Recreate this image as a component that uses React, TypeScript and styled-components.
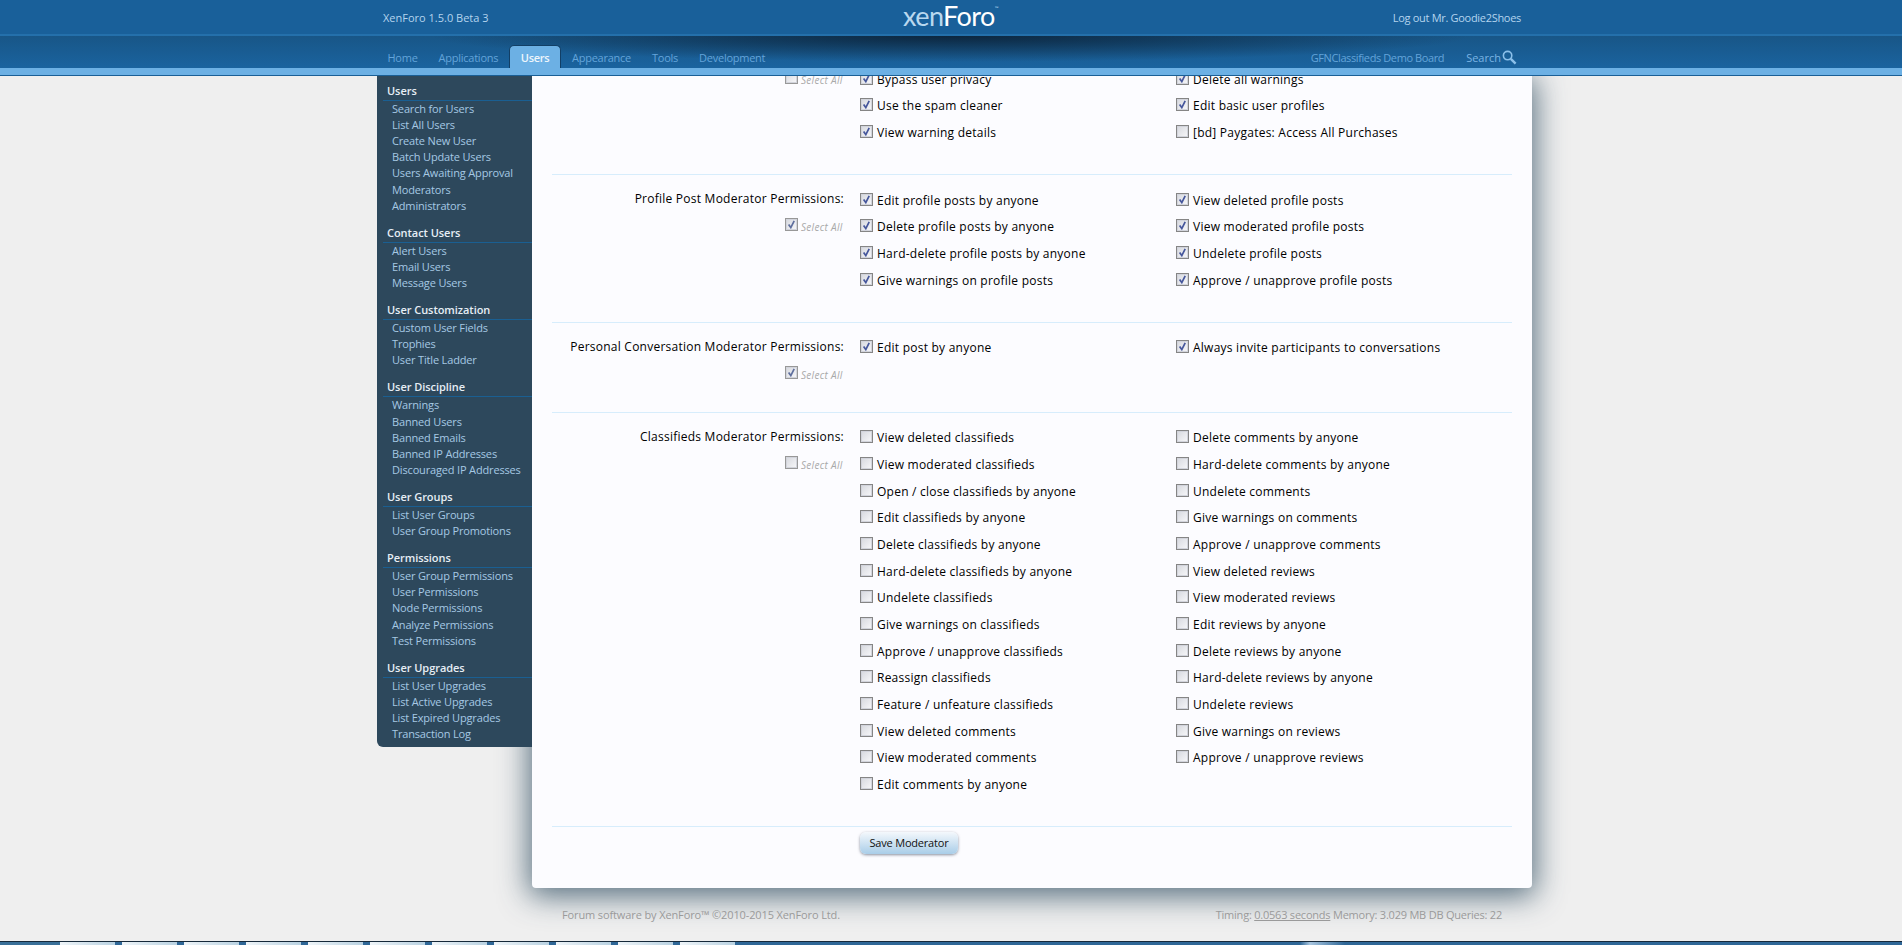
import { FC } from "react";
import styled, { createGlobalStyle } from "styled-components";

const FONT = `"Open Sans", "Noto Sans", sans-serif`;

const GlobalStyle = createGlobalStyle`
  html, body {
    margin: 0;
    height: 100%;
    background: #efefef;
    overflow: hidden;
  }
  body {
    font-family: ${FONT};
    font-size: 12px;
  }
`;

const NAV_TABS = ["Home", "Applications", "Users", "Appearance", "Tools", "Development"];

const SIDEBAR = [
  {
    title: "Users",
    items: [
      "Search for Users",
      "List All Users",
      "Create New User",
      "Batch Update Users",
      "Users Awaiting Approval",
      "Moderators",
      "Administrators",
    ],
  },
  { title: "Contact Users", items: ["Alert Users", "Email Users", "Message Users"] },
  { title: "User Customization", items: ["Custom User Fields", "Trophies", "User Title Ladder"] },
  {
    title: "User Discipline",
    items: ["Warnings", "Banned Users", "Banned Emails", "Banned IP Addresses", "Discouraged IP Addresses"],
  },
  { title: "User Groups", items: ["List User Groups", "User Group Promotions"] },
  {
    title: "Permissions",
    items: [
      "User Group Permissions",
      "User Permissions",
      "Node Permissions",
      "Analyze Permissions",
      "Test Permissions",
    ],
  },
  {
    title: "User Upgrades",
    items: ["List User Upgrades", "List Active Upgrades", "List Expired Upgrades", "Transaction Log"],
  },
];

interface PermissionSection {
  label?: string;
  selectAll: boolean;
  checked: boolean;
  left: string[];
  right: string[];
  rightChecked?: boolean[];
}

const SECTIONS: PermissionSection[] = [
  {
    selectAll: false,
    checked: true,
    left: ["Bypass user privacy", "Use the spam cleaner", "View warning details"],
    right: ["Delete all warnings", "Edit basic user profiles", "[bd] Paygates: Access All Purchases"],
    rightChecked: [true, true, false],
  },
  {
    label: "Profile Post Moderator Permissions:",
    selectAll: true,
    checked: true,
    left: [
      "Edit profile posts by anyone",
      "Delete profile posts by anyone",
      "Hard-delete profile posts by anyone",
      "Give warnings on profile posts",
    ],
    right: [
      "View deleted profile posts",
      "View moderated profile posts",
      "Undelete profile posts",
      "Approve / unapprove profile posts",
    ],
  },
  {
    label: "Personal Conversation Moderator Permissions:",
    selectAll: true,
    checked: true,
    left: ["Edit post by anyone"],
    right: ["Always invite participants to conversations"],
  },
  {
    label: "Classifieds Moderator Permissions:",
    selectAll: false,
    checked: false,
    left: [
      "View deleted classifieds",
      "View moderated classifieds",
      "Open / close classifieds by anyone",
      "Edit classifieds by anyone",
      "Delete classifieds by anyone",
      "Hard-delete classifieds by anyone",
      "Undelete classifieds",
      "Give warnings on classifieds",
      "Approve / unapprove classifieds",
      "Reassign classifieds",
      "Feature / unfeature classifieds",
      "View deleted comments",
      "View moderated comments",
      "Edit comments by anyone",
    ],
    right: [
      "Delete comments by anyone",
      "Hard-delete comments by anyone",
      "Undelete comments",
      "Give warnings on comments",
      "Approve / unapprove comments",
      "View deleted reviews",
      "View moderated reviews",
      "Edit reviews by anyone",
      "Delete reviews by anyone",
      "Hard-delete reviews by anyone",
      "Undelete reviews",
      "Give warnings on reviews",
      "Approve / unapprove reviews",
    ],
  },
];

const CheckBox: FC<{ checked: boolean; muted?: boolean }> = ({ checked, muted }) => (
  <BoxStyled $muted={muted}>
    {checked && (
      <svg width="9" height="9" viewBox="0 0 9 9">
        <path
          d="M1.6 4.6 L3.8 7.6 L7.2 0.8"
          fill="none"
          stroke={muted ? "#5f6f9e" : "#46579c"}
          strokeWidth="1.7"
        />
      </svg>
    )}
  </BoxStyled>
);

const PermissionColumn: FC<{ items: string[]; checked: boolean; flags?: boolean[] }> = ({
  items,
  checked,
  flags,
}) => (
  <ColumnStyled>
    {items.map((item, i) => (
      <RowStyled key={item}>
        <CheckBox checked={flags ? flags[i] : checked} />
        <span>{item}</span>
      </RowStyled>
    ))}
  </ColumnStyled>
);

const App: FC = () => (
  <PageStyled>
    <GlobalStyle />
    <HeaderStyled>
      <TopBarStyled>
        <span>XenForo 1.5.0 Beta 3</span>
        <LogoStyled>
          xen<strong>Foro</strong>
          <sup>™</sup>
        </LogoStyled>
        <LogoutStyled>Log out Mr. Goodie2Shoes</LogoutStyled>
      </TopBarStyled>
      <NavStyled>
        <TabListStyled>
          {NAV_TABS.map((tab) => (
            <TabStyled key={tab} $active={tab === "Users"}>
              {tab}
            </TabStyled>
          ))}
        </TabListStyled>
        <NavRightStyled>
          <BoardStyled>GFNClassifieds Demo Board</BoardStyled>
          <SearchStyled>
            Search
            <svg width="15" height="15" viewBox="0 0 15 15">
              <circle cx="5.6" cy="5.6" r="4.2" fill="none" stroke="#8cc0ea" strokeWidth="1.6" />
              <path d="M8.8 8.8 L13.6 13.6" stroke="#8cc0ea" strokeWidth="2.4" />
            </svg>
          </SearchStyled>
        </NavRightStyled>
      </NavStyled>
      <SubBarStyled />
    </HeaderStyled>

    <MainStyled>
      <SidebarStyled>
        {SIDEBAR.map((group) => (
          <SideGroupStyled key={group.title}>
            <SideTitleStyled>{group.title}</SideTitleStyled>
            {group.items.map((item) => (
              <SideItemStyled key={item}>{item}</SideItemStyled>
            ))}
          </SideGroupStyled>
        ))}
      </SidebarStyled>

      <ContentStyled>
        <PanelStyled>
          {SECTIONS.map((section, i) => (
            <SectionStyled key={i} $first={i === 0}>
              <LabelColumnStyled>
                {section.label && <LabelStyled>{section.label}</LabelStyled>}
                <SelectAllStyled $first={i === 0}>
                  <CheckBox checked={section.selectAll} muted />
                  <em>Select All</em>
                </SelectAllStyled>
              </LabelColumnStyled>
              <PermissionColumn items={section.left} checked={section.checked} />
              <PermissionColumn
                items={section.right}
                checked={section.checked}
                flags={section.rightChecked}
              />
            </SectionStyled>
          ))}
          <ActionsStyled>
            <SaveButtonStyled type="button">Save Moderator</SaveButtonStyled>
          </ActionsStyled>
        </PanelStyled>
        <FooterStyled>
          <CopyrightStyled>Forum software by XenForo™ ©2010-2015 XenForo Ltd.</CopyrightStyled>
          <TimingStyled>
            Timing: <u>0.0563 seconds</u> Memory: 3.029 MB DB Queries: 22
          </TimingStyled>
        </FooterStyled>
      </ContentStyled>
    </MainStyled>

    <TaskbarStyled>
      <TaskStartStyled />
      {Array.from({ length: 11 }).map((_, i) => (
        <TaskButtonStyled key={i} />
      ))}
    </TaskbarStyled>
  </PageStyled>
);

const PageStyled = styled.div`
  display: flex;
  flex-direction: column;
  height: 945px;
  overflow: hidden;
  background: #efefef;
`;

const HeaderStyled = styled.header`
  position: relative;
  z-index: 2;
  flex: none;
`;

const TopBarStyled = styled.div`
  position: relative;
  display: flex;
  align-items: center;
  justify-content: space-between;
  height: 34px;
  padding: 0 381px 0 383px;
  background: #19609a;
  border-bottom: 2px solid #2470ab;
  color: #b4d4ee;
  font-size: 11px;
`;

const LogoutStyled = styled.span`
  letter-spacing: -0.3px;
`;

const LogoStyled = styled.div`
  position: absolute;
  left: 903px;
  top: 1px;
  font-family: "Lato", sans-serif;
  font-weight: 400;
  font-size: 27px;
  line-height: 30px;
  color: #b9d8ef;
  letter-spacing: -0.6px;

  strong {
    font-weight: 400;
    color: #ffffff;
  }

  sup {
    font-size: 5px;
    vertical-align: 16px;
    line-height: 0;
    color: #b9d8ef;
  }
`;

const NavStyled = styled.nav`
  display: flex;
  align-items: flex-end;
  justify-content: space-between;
  height: 32px;
  padding: 0 385px 0 377px;
  background:
    radial-gradient(ellipse 520px 26px at 50% 0, rgba(10, 30, 50, 0.85), rgba(10, 30, 50, 0) 100%),
    linear-gradient(#185687, #1a639f);
`;

const TabListStyled = styled.div`
  display: flex;
  align-items: flex-end;
`;

const TabStyled = styled.div<{ $active: boolean }>`
  height: 22px;
  line-height: 24px;
  padding: 0 10.5px;
  font-size: 11px;
  letter-spacing: -0.25px;
  color: ${({ $active }) => ($active ? "#eef6fc" : "#63a4da")};
  font-weight: ${({ $active }) => ($active ? 600 : 400)};
  ${({ $active }) =>
    $active &&
    `
    background: #6cb0e4;
    border: 1px solid #123f66;
    border-bottom: none;
    border-radius: 5px 5px 0 0;
    padding: 0 11px;
  `}
`;

const NavRightStyled = styled.div`
  display: flex;
  align-items: center;
  gap: 22px;
  height: 22px;
  color: #63a4da;
  font-size: 11px;
`;

const BoardStyled = styled.span`
  letter-spacing: -0.4px;
`;

const SearchStyled = styled.span`
  display: flex;
  align-items: center;
  gap: 1px;
  color: #7ab4e4;
`;

const SubBarStyled = styled.div`
  height: 7px;
  background: #6cb0e4;
  border-bottom: 1px solid #1a5f96;
`;

const MainStyled = styled.main`
  flex: 1;
  min-height: 0;
  display: flex;
  align-items: flex-start;
  padding-left: 377px;
`;

const SidebarStyled = styled.aside`
  position: relative;
  z-index: 1;
  width: 155px;
  height: 671px;
  box-sizing: border-box;
  padding: 7px 0 0 6px;
  background: #2d485c;
  border-radius: 0 0 0 6px;
`;

const SideGroupStyled = styled.div`
  margin-bottom: 11px;
`;

const SideTitleStyled = styled.div`
  height: 16px;
  line-height: 16px;
  padding-left: 4px;
  padding-bottom: 1px;
  border-bottom: 1px solid #1a5f92;
  color: #e6eef5;
  font-size: 11px;
  font-weight: 600;
  letter-spacing: -0.05px;
`;

const SideItemStyled = styled.div`
  height: 16.12px;
  line-height: 16px;
  padding-left: 9px;
  color: #a6c8e4;
  font-size: 11px;
  letter-spacing: -0.16px;
`;

const ContentStyled = styled.div`
  width: 1000px;
`;

const PanelStyled = styled.div`
  height: 812px;
  box-sizing: border-box;
  padding: 0 20px;
  overflow: hidden;
  background: #fcfcff;
  border-radius: 0 0 4px 4px;
  box-shadow: 0 5px 30px 3px rgba(48, 78, 98, 0.8);
`;

const SectionStyled = styled.section<{ $first: boolean }>`
  display: grid;
  grid-template-columns: 308px 316px 336px;
  padding: ${({ $first }) => ($first ? "0" : "12px")} 0 28px;
  margin-top: ${({ $first }) => ($first ? "-10px" : "0")};
  border-bottom: 1px solid #d7edfc;
  letter-spacing: 0.24px;
`;

const LabelColumnStyled = styled.div`
  display: flex;
  flex-direction: column;
  align-items: flex-end;
  padding-right: 16px;
`;

const LabelStyled = styled.div`
  height: 22px;
  padding-top: 1px;
  line-height: 22px;
  color: #000;
`;

const SelectAllStyled = styled.div<{ $first: boolean }>`
  display: flex;
  align-items: center;
  gap: 3px;
  height: 20px;
  margin-top: ${({ $first }) => ($first ? "2px" : "6px")};
  color: #a9a9a9;

  em {
    margin-top: 3px;
    font-size: 10px;
    letter-spacing: 0.3px;
    width: 43px;
    white-space: nowrap;
  }
`;

const ColumnStyled = styled.div`
  display: flex;
  flex-direction: column;
`;

const RowStyled = styled.div`
  display: flex;
  align-items: center;
  gap: 4px;
  height: 26.67px;
  color: #000;
  white-space: nowrap;
`;

const BoxStyled = styled.span<{ $muted?: boolean }>`
  flex: none;
  display: inline-flex;
  align-items: center;
  justify-content: center;
  width: 13px;
  height: 13px;
  box-sizing: border-box;
  margin-top: -2px;
  border: 1px solid ${({ $muted }) => ($muted ? "#989898" : "#858585")};
  background: linear-gradient(135deg, #d6d8de, #f8f8fa);
  box-shadow: inset 0 0 0 1px #d2d4dc;
`;

const ActionsStyled = styled.div`
  padding: 5px 0 0 308px;
`;

const SaveButtonStyled = styled.button`
  display: block;
  width: 98px;
  height: 22px;
  padding: 0;
  border: 0;
  border-radius: 6px;
  font-family: ${FONT};
  font-size: 11px;
  letter-spacing: -0.2px;
  color: #111;
  background: linear-gradient(#f4f8fc, #a9cde8);
  box-shadow: 0 1px 3px rgba(60, 70, 90, 0.6);
`;

const FooterStyled = styled.footer`
  display: flex;
  justify-content: space-between;
  padding: 19px 30px 0;
  color: #9a9a9a;
  font-size: 11px;
  line-height: 16px;
`;

const CopyrightStyled = styled.span`
  letter-spacing: -0.12px;
`;

const TimingStyled = styled.span`
  letter-spacing: -0.22px;
`;

const TaskbarStyled = styled.div`
  flex: none;
  display: flex;
  height: 3px;
  border-top: 1px solid #16293a;
  background: linear-gradient(90deg, #2f6797 0, #2f6797 1300px, #a8c6e0 1310px, #2f6797 1345px);
`;

const TaskStartStyled = styled.div`
  width: 60px;
  background: #3a7099;
`;

const TaskButtonStyled = styled.div`
  width: 55px;
  margin-right: 7px;
  background: linear-gradient(90deg, #eef4f8, #b9d2e2);
`;

export default App;
